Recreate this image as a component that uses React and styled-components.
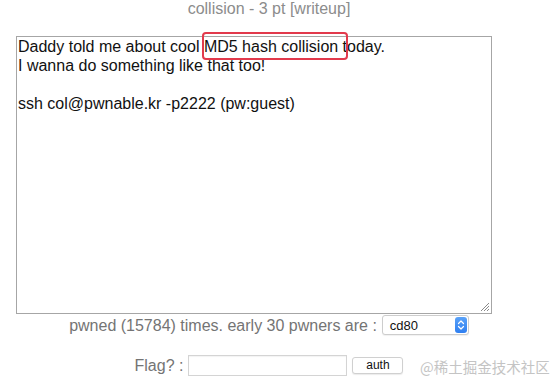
import React from "react";
import styled, { createGlobalStyle } from "styled-components";

const Global = createGlobalStyle`
  html, body { margin: 0; padding: 0; background: #fff; }
  body { font-family: "Liberation Sans", Arial, sans-serif; overflow: hidden; }
`;

const Page = styled.div`
  position: relative;
  width: 554px;
  height: 378px;
  overflow: hidden;
`;

const Column = styled.div`
  width: 538px;
  display: flex;
  flex-direction: column;
  align-items: center;
`;

const Title = styled.div`
  font-size: 16px;
  line-height: 17px;
  color: #8c8c8c;
`;

const TextBox = styled.div`
  position: relative;
  align-self: flex-start;
  box-sizing: border-box;
  margin: 19px 0 0 16px;
  width: 476px;
  height: 278px;
  border: 1px solid #a6a6a6;
  padding: 0 1px;
  font-size: 16px;
  line-height: 19px;
  color: #111;
  white-space: pre-wrap;
`;

const Marked = styled.span`
  position: relative;
  &::after {
    content: "";
    position: absolute;
    left: -2px;
    right: -10px;
    top: -6px;
    bottom: -5px;
    border: 2px solid #e23a4c;
    border-radius: 4px;
  }
`;

const Grip = styled.svg`
  position: absolute;
  right: 1px;
  bottom: 1px;
`;

const Row = styled.div`
  display: flex;
  align-items: center;
  gap: ${(p) => p.$gap || 4}px;
  margin-top: ${(p) => p.$top || 0}px;
  font-size: 16px;
  line-height: 19px;
  color: #747474;
`;

const Select = styled.div`
  position: relative;
  box-sizing: border-box;
  width: 87px;
  height: 20px;
  border: 1px solid #cdcdcd;
  border-radius: 3px;
  background: #fff;
  display: flex;
  align-items: center;
  justify-content: space-between;
  padding: 0 1px 0 7px;
  font-size: 13px;
  color: #111;
  box-shadow: 0 1px 1px rgba(0,0,0,0.06);
`;

const Stepper = styled.div`
  width: 12px;
  height: 16px;
  border-radius: 3px;
  background: linear-gradient(#5aa2f8, #2f7ff0);
  display: flex;
  align-items: center;
  justify-content: center;
`;

const Input = styled.div`
  box-sizing: border-box;
  width: 159px;
  height: 21px;
  border: 1px solid #d4d4d4;
  background: #fff;
  box-shadow: inset 0 1px 1px rgba(0,0,0,0.05);
`;

const Button = styled.div`
  box-sizing: border-box;
  width: 51px;
  height: 17px;
  border: 1px solid #d0d0d0;
  border-radius: 3px;
  background: #fff;
  color: #111;
  font-size: 12px;
  line-height: 15px;
  text-align: center;
  box-shadow: 0 1px 1px rgba(0,0,0,0.08);
`;

const Watermark = styled.div`
  position: absolute;
  left: 420px;
  top: 358px;
  font-family: "Noto Sans CJK SC", sans-serif;
  font-size: 14.5px;
  line-height: 18px;
  color: #c4c4c4;
  white-space: nowrap;
`;

export default function App() {
  return (
    <Page>
      <Global />
      <Column>
        <Title>collision - 3 pt [writeup]</Title>
        <TextBox>
          {"Daddy told me about cool "}
          <Marked>MD5 hash collision</Marked>
          {" today.\nI wanna do something like that too!\n\nssh col@pwnable.kr -p2222 (pw:guest)"}
          <Grip width="11" height="11" viewBox="0 0 11 11">
            <path d="M10 2 L2 10 M10 5 L5 10 M10 8 L8 10" stroke="#8a8a8a" strokeWidth="1" fill="none" />
          </Grip>
        </TextBox>
        <Row $top={1} $gap={5}>
          <span>pwned (15784) times. early 30 pwners are :</span>
          <Select>
            <span>cd80</span>
            <Stepper>
              <svg width="8" height="12" viewBox="0 0 8 12">
                <path d="M1.5 4.5 L4 2 L6.5 4.5 M1.5 7.5 L4 10 L6.5 7.5" stroke="#fff" strokeWidth="1.2" fill="none" strokeLinecap="round" strokeLinejoin="round" />
              </svg>
            </Stepper>
          </Select>
        </Row>
        <Row $top={20} $gap={5}>
          <span>Flag? :</span>
          <Input />
          <Button>auth</Button>
        </Row>
      </Column>
      <Watermark>@稀土掘金技术社区</Watermark>
    </Page>
  );
}
